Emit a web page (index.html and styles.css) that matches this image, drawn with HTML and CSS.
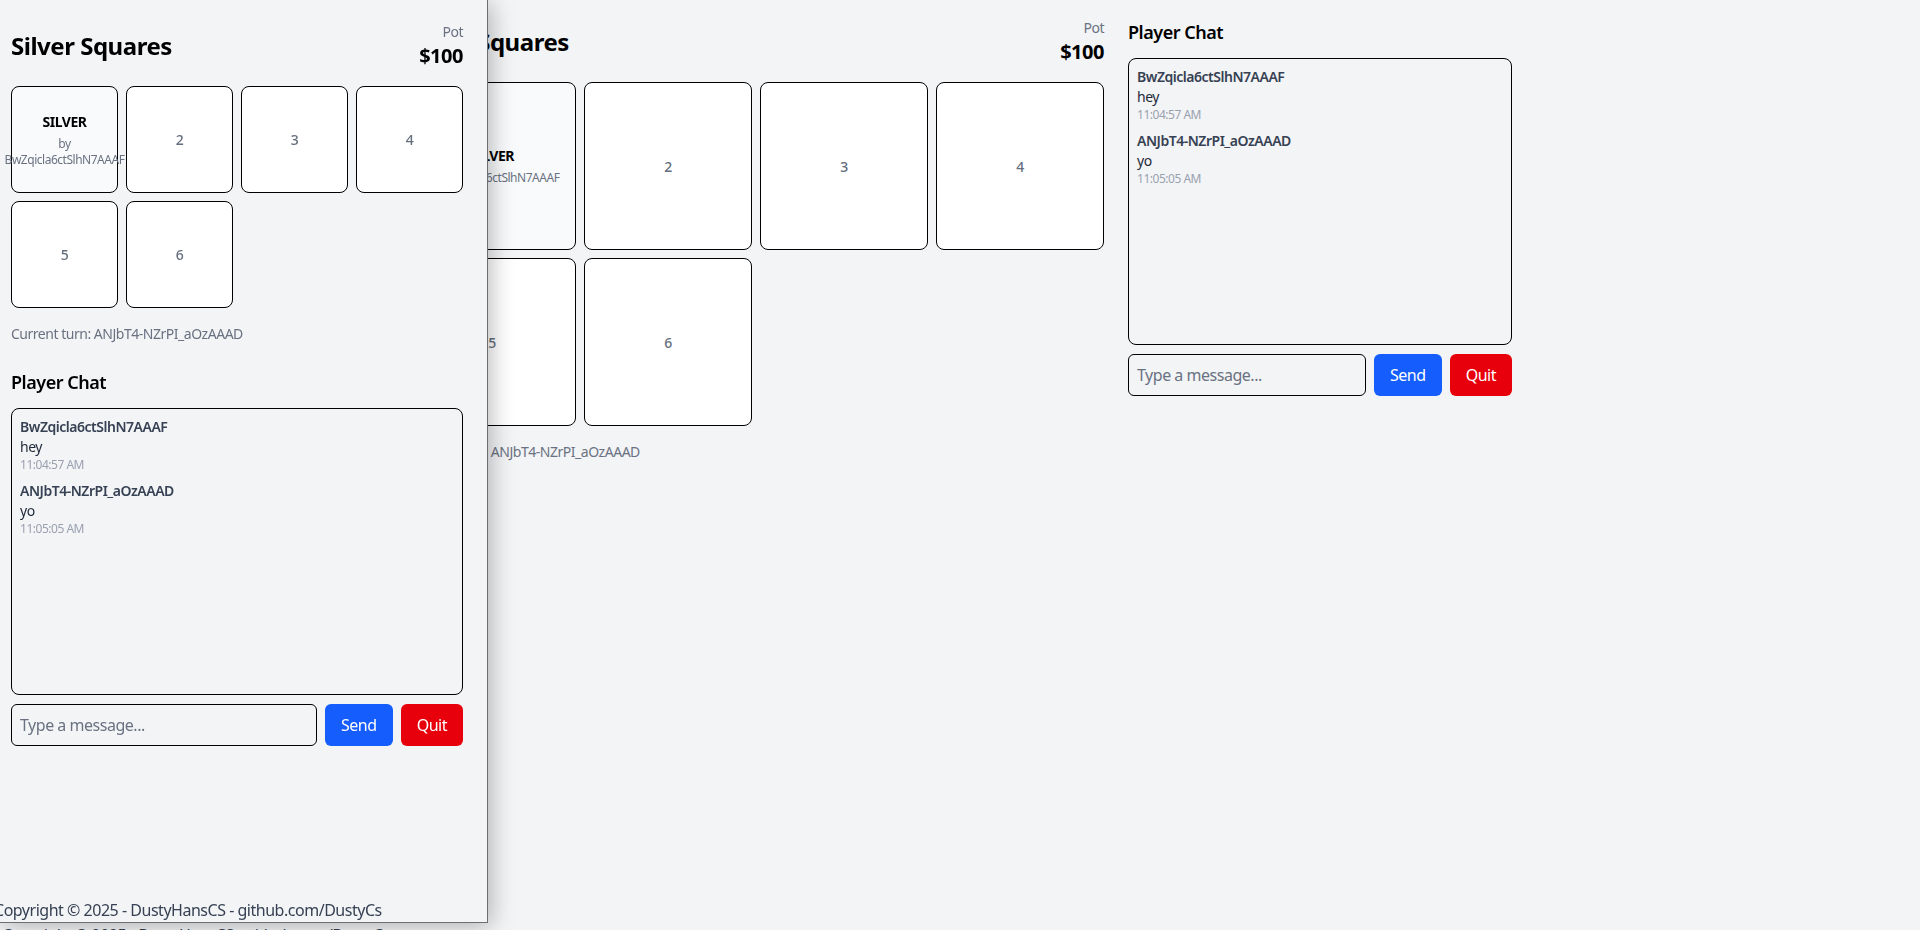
FILE: index.html
```html
<!DOCTYPE html>
<html lang="en">
<head>
<meta charset="utf-8">
<title>Silver Squares</title>
<link rel="stylesheet" href="styles.css">
</head>
<body>
<div class="page">
  <div class="layout layout--wide">
    <section class="board">
      <header class="board-head">
        <h1 class="title">Silver Squares</h1>
        <div class="pot"><div class="pot-label">Pot</div><div class="pot-value">$100</div></div>
      </header>
      <div class="grid">
        <div class="square owned"><div class="owner-name">SILVER</div><div class="owner-by">by BwZqicla6ctSlhN7AAAF</div></div>
        <div class="square"><span class="num">2</span></div>
        <div class="square"><span class="num">3</span></div>
        <div class="square"><span class="num">4</span></div>
        <div class="square"><span class="num">5</span></div>
        <div class="square"><span class="num">6</span></div>
      </div>
      <p class="turn">Current turn: ANJbT4-NZrPI_aOzAAAD</p>
    </section>
    <aside class="chat">
      <h2 class="chat-title">Player Chat</h2>
      <div class="messages">
        <div class="msg"><div class="msg-name">BwZqicla6ctSlhN7AAAF</div><div class="msg-text">hey</div><div class="msg-time">11:04:57 AM</div></div>
        <div class="msg"><div class="msg-name">ANJbT4-NZrPI_aOzAAAD</div><div class="msg-text">yo</div><div class="msg-time">11:05:05 AM</div></div>
      </div>
      <div class="chat-form">
        <input class="chat-input" type="text" placeholder="Type a message...">
        <button class="btn btn-send">Send</button>
        <button class="btn btn-quit">Quit</button>
      </div>
    </aside>
  </div>
  <footer class="page-footer">Copyright © 2025 - DustyHansCS - github.com/DustyCs</footer>
</div>

<div class="preview">
  <div class="layout layout--stacked">
    <section class="board">
      <header class="board-head">
        <h1 class="title">Silver Squares</h1>
        <div class="pot"><div class="pot-label">Pot</div><div class="pot-value">$100</div></div>
      </header>
      <div class="grid">
        <div class="square owned"><div class="owner-name">SILVER</div><div class="owner-by">by BwZqicla6ctSlhN7AAAF</div></div>
        <div class="square"><span class="num">2</span></div>
        <div class="square"><span class="num">3</span></div>
        <div class="square"><span class="num">4</span></div>
        <div class="square"><span class="num">5</span></div>
        <div class="square"><span class="num">6</span></div>
      </div>
      <p class="turn">Current turn: ANJbT4-NZrPI_aOzAAAD</p>
    </section>
    <aside class="chat">
      <h2 class="chat-title">Player Chat</h2>
      <div class="messages">
        <div class="msg"><div class="msg-name">BwZqicla6ctSlhN7AAAF</div><div class="msg-text">hey</div><div class="msg-time">11:04:57 AM</div></div>
        <div class="msg"><div class="msg-name">ANJbT4-NZrPI_aOzAAAD</div><div class="msg-text">yo</div><div class="msg-time">11:05:05 AM</div></div>
      </div>
      <div class="chat-form">
        <input class="chat-input" type="text" placeholder="Type a message...">
        <button class="btn btn-send">Send</button>
        <button class="btn btn-quit">Quit</button>
      </div>
    </aside>
  </div>
  <footer class="preview-footer">Copyright © 2025 - DustyHansCS - github.com/DustyCs</footer>
</div>
</body>
</html>
```
FILE: styles.css
```css
html, body {
  margin: 0;
  height: 100%;
  overflow: hidden;
  background: #f3f4f6;
  font-family: "Noto Sans", "Open Sans", sans-serif;
  letter-spacing: -0.03em;
  color: #000;
}

.page {
  min-height: 947px;
  display: flex;
  flex-direction: column;
}

.layout {
  display: flex;
}

.layout--wide {
  width: 1104px;
  margin: 0 auto;
  padding-top: 18px;
  gap: 24px;
  align-items: flex-start;
}

.layout--wide .board { width: 696px; }
.layout--wide .chat { width: 384px; }

.layout--stacked {
  flex-direction: column;
  gap: 24px;
}

.page-footer {
  margin-top: auto;
  padding-left: 2px;
  font-size: 16px;
  line-height: 24px;
  color: #364153;
  white-space: nowrap;
}

/* board */
.board-head {
  display: flex;
  justify-content: space-between;
  align-items: center;
  margin-bottom: 16px;
}

.title {
  margin: 0;
  font-size: 24px;
  line-height: 32px;
  font-weight: 700;
}

.pot { text-align: right; }

.pot-label {
  font-size: 14px;
  line-height: 20px;
  color: #6a7282;
}

.pot-value {
  font-size: 20px;
  line-height: 28px;
  font-weight: 700;
}

.grid {
  display: grid;
  grid-template-columns: repeat(4, minmax(0, 1fr));
  gap: 8px;
}

.square {
  aspect-ratio: 1 / 1;
  min-width: 0;
  box-sizing: border-box;
  background: #fff;
  border: 1px solid #000;
  border-radius: 8px;
  display: flex;
  flex-direction: column;
  align-items: center;
  justify-content: center;
  text-align: center;
}

.square.owned { background: #f9fafb; }

.num {
  font-size: 14px;
  font-weight: 500;
  color: #646e7d;
}

.owner-name {
  font-size: 14px;
  line-height: 20px;
  font-weight: 700;
}

.owner-by {
  margin-top: 4px;
  font-size: 12px;
  line-height: 16px;
  color: #6a7282;
}

.turn {
  margin: 16px 0 0;
  font-size: 14px;
  line-height: 20px;
  color: #6a7282;
}

/* chat */
.chat-title {
  margin: 0 0 12px;
  font-size: 18px;
  line-height: 28px;
  font-weight: 600;
}

.messages {
  height: 287px;
  box-sizing: border-box;
  border: 1px solid #000;
  border-radius: 8px;
  padding: 8px;
}

.msg + .msg { margin-top: 8px; }

.msg-name {
  font-size: 14px;
  line-height: 20px;
  font-weight: 600;
  color: #364153;
}

.msg-text {
  font-size: 14px;
  line-height: 20px;
  color: #1e2939;
}

.msg-time {
  font-size: 12px;
  line-height: 16px;
  color: #99a1af;
}

.chat-form {
  display: flex;
  gap: 8px;
  margin-top: 9px;
}

.chat-input {
  flex: 1;
  min-width: 0;
  height: 42px;
  box-sizing: border-box;
  margin: 0;
  border: 1px solid #000;
  border-radius: 6px;
  padding: 0 8px;
  background: transparent;
  font-family: "Noto Sans", "Open Sans", sans-serif;
  letter-spacing: -0.03em;
  font-size: 16px;
  color: #000;
}

.chat-input::placeholder { color: #6a7282; }

.btn {
  height: 42px;
  margin: 0;
  border: 0;
  border-radius: 6px;
  padding: 0 16px;
  font-family: "Noto Sans", "Open Sans", sans-serif;
  letter-spacing: -0.03em;
  font-size: 16px;
  color: #fff;
}

.btn-send { background: #155dfc; }
.btn-quit { background: #e7000b; }

/* overlay preview window */
.preview {
  position: fixed;
  left: 0;
  top: 0;
  width: 488px;
  height: 923px;
  box-sizing: border-box;
  padding: 22px 24px 0 11px;
  background: #f3f4f6;
  border-right: 1px solid #6e6e6e;
  border-bottom: 1px solid #6e6e6e;
  box-shadow: 3px 3px 22px rgba(0, 0, 0, 0.28);
  display: flex;
  flex-direction: column;
}

.preview-footer {
  margin-top: auto;
  margin-left: -17px;
  font-size: 16px;
  line-height: 24px;
  color: #364153;
  white-space: nowrap;
}
```
